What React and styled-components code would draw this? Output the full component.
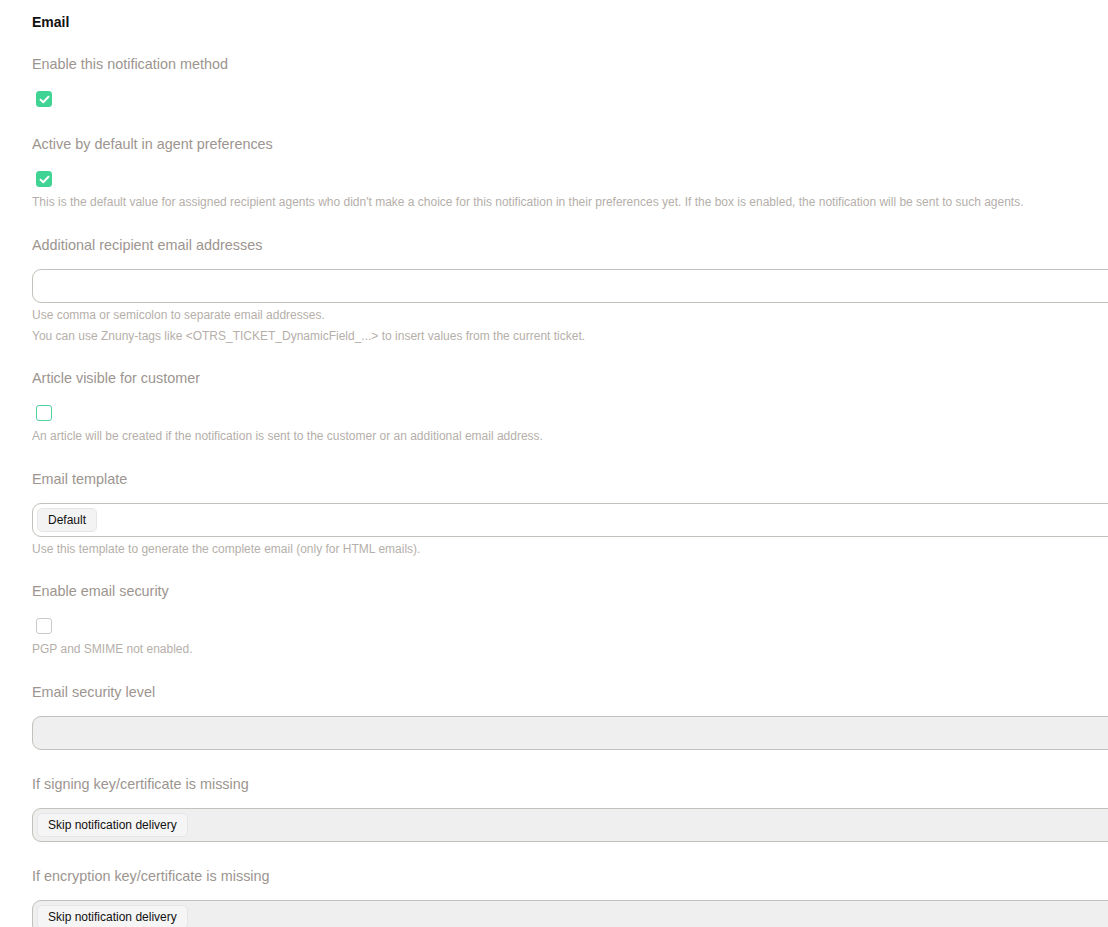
import React from "react";
import styled, { createGlobalStyle } from "styled-components";

const GlobalStyle = createGlobalStyle`
  html, body {
    margin: 0;
    padding: 0;
    background: #ffffff;
    overflow: hidden;
    font-family: "Liberation Sans", Arial, sans-serif;
  }
`;

// Page
const Page = styled.div`
  width: 1100px;
  padding: 13px 0 40px 32px;
`;

const Title = styled.h3`
  margin: 0 0 23px;
  font-size: 14px;
  line-height: 18px;
  font-weight: 700;
  color: #111;
`;

const Field = styled.div`
  display: flex;
  flex-direction: column;
  margin-bottom: 24px;
`;

const Label = styled.label`
  font-size: 14.4px;
  line-height: 20px;
  color: #9c958f;
  margin-bottom: 14px;
`;

const Help = styled.div`
  font-size: 12px;
  line-height: 21px;
  color: #b5afaa;
  white-space: nowrap;
  margin-top: 2px;

  & + & {
    margin-top: 0;
  }
  &:last-child {
    margin-bottom: -2.5px;
  }
`;

// Checkbox
const CheckWrap = styled.div`
  padding: 3px 0 3px 4px;
  height: 16px;
`;

const Box = styled.span`
  display: flex;
  align-items: center;
  justify-content: center;
  width: 16px;
  height: 16px;
  box-sizing: border-box;
  border-radius: 3px;
  background: ${(p) => (p.checked ? "#3fd394" : "#fff")};
  border: 1px solid
    ${(p) => (p.checked ? "#3fd394" : p.focus ? "#4fd39f" : "#c9c9c9")};
`;

const Checkbox = ({ checked, focus }) => (
  <CheckWrap>
    <Box checked={checked} focus={focus}>
      {checked && (
        <svg width="11" height="9" viewBox="0 0 11 9">
          <path
            d="M1.5 4.6 L4.2 7.2 L9.5 1.8"
            fill="none"
            stroke="#fff"
            strokeWidth="2"
            strokeLinecap="round"
            strokeLinejoin="round"
          />
        </svg>
      )}
    </Box>
  </CheckWrap>
);

// Inputs
const Input = styled.div`
  height: 34px;
  box-sizing: border-box;
  border: 1px solid #c3c1bb;
  border-radius: 9px;
  background: ${(p) => (p.disabled ? "#efefef" : "#fff")};
  display: flex;
  align-items: center;
  padding: 0 4px;
`;

const Chip = styled.span`
  display: inline-flex;
  align-items: center;
  height: 24px;
  box-sizing: border-box;
  padding: 0 10px;
  border: 1px solid #e6e6e6;
  border-radius: 5px;
  background: ${(p) => (p.disabled ? "#f5f5f5" : "#f3f3f3")};
  font-size: 12px;
  color: #111;
`;

const App = () => (
  <>
    <GlobalStyle />
    <Page>
      <Title>Email</Title>

      <Field>
        <Label>Enable this notification method</Label>
        <Checkbox checked />
      </Field>

      <Field>
        <Label>Active by default in agent preferences</Label>
        <Checkbox checked />
        <Help>
          This is the default value for assigned recipient agents who didn't make a choice for
          this notification in their preferences yet. If the box is enabled, the notification will
          be sent to such agents.
        </Help>
      </Field>

      <Field>
        <Label>Additional recipient email addresses</Label>
        <Input />
        <Help>Use comma or semicolon to separate email addresses.</Help>
        <Help>
          You can use Znuny-tags like &lt;OTRS_TICKET_DynamicField_...&gt; to insert values from
          the current ticket.
        </Help>
      </Field>

      <Field>
        <Label>Article visible for customer</Label>
        <Checkbox focus />
        <Help>
          An article will be created if the notification is sent to the customer or an additional
          email address.
        </Help>
      </Field>

      <Field>
        <Label>Email template</Label>
        <Input>
          <Chip>Default</Chip>
        </Input>
        <Help>Use this template to generate the complete email (only for HTML emails).</Help>
      </Field>

      <Field>
        <Label>Enable email security</Label>
        <Checkbox />
        <Help>PGP and SMIME not enabled.</Help>
      </Field>

      <Field>
        <Label>Email security level</Label>
        <Input disabled />
      </Field>

      <Field>
        <Label>If signing key/certificate is missing</Label>
        <Input disabled>
          <Chip disabled>Skip notification delivery</Chip>
        </Input>
      </Field>

      <Field>
        <Label>If encryption key/certificate is missing</Label>
        <Input disabled>
          <Chip disabled>Skip notification delivery</Chip>
        </Input>
      </Field>
    </Page>
  </>
);

export default App;
